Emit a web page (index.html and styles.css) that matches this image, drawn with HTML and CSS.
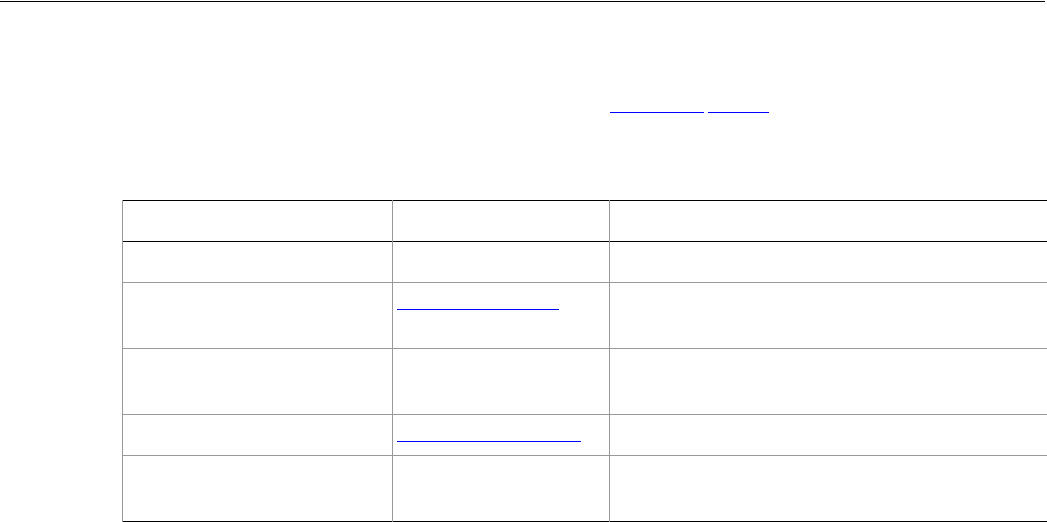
FILE: index.html
```html
<!DOCTYPE html>
<html lang="en">
<head>
<meta charset="utf-8">
<title>System requirements</title>
<link rel="stylesheet" href="styles.css">
</head>
<body>
<div class="rule"></div>
<main class="content">
  <p class="intro">Before installing the package, please, review the minimum hardware <a href="#req">requirements</a> <a href="#check">checklist</a>.</p>
  <table class="grid">
    <thead>
      <tr>
        <th class="c1">Component</th>
        <th class="c2">Reference</th>
        <th class="c3">Notes</th>
      </tr>
    </thead>
    <tbody>
      <tr>
        <td>Operating system</td>
        <td>Linux 5.x or later</td>
        <td>64-bit kernel required</td>
      </tr>
      <tr>
        <td>Development headers</td>
        <td><a href="#api">Programming interface</a></td>
        <td>Headers must match the installed kernel version exactly, otherwise the build step will fail.</td>
      </tr>
      <tr>
        <td>Runtime libraries</td>
        <td>glibc 2.31</td>
        <td>Older releases may work but are not tested; use the bundled compatibility layer if needed.</td>
      </tr>
      <tr>
        <td>Documentation</td>
        <td><a href="#notes">Release notes and errata.</a></td>
        <td>Updated with every release</td>
      </tr>
      <tr>
        <td>Build tools</td>
        <td>GCC 10, CMake 3.20</td>
        <td>Clang is supported as an alternative compiler when building from the source distribution.</td>
      </tr>
    </tbody>
  </table>
</main>
</body>
</html>
```
FILE: styles.css
```css
html, body {
  margin: 0;
  padding: 0;
  background: #fff;
}
body {
  font-family: "Liberation Sans", Arial, sans-serif;
  font-size: 16px;
  line-height: 25px;
  color: transparent;
}
.rule {
  margin: 1px 2px 0 0;
  border-top: 1px solid #000;
}
.content {
  padding-left: 122px;
}
.intro {
  margin: 92px 0 0 0;
}
a {
  color: transparent;
  text-decoration: none;
  background-image: linear-gradient(#0000ff, #0000ff);
  background-repeat: no-repeat;
  background-size: 100% 1px;
  background-position: 0 calc(100% - 2px);
}
.grid {
  margin-top: 81px;
  width: 925px;
  table-layout: fixed;
  border-collapse: collapse;
  border-left: 1px solid #999;
  border-right: 1px solid #999;
  border-bottom: 1px solid #000;
}
.grid thead tr {
  border-top: 1px solid #000;
  border-bottom: 1px solid #000;
}
.grid th,
.grid td {
  box-sizing: border-box;
  padding: 8px 4px 7px 4px;
  text-align: left;
  vertical-align: top;
  font-weight: normal;
  border-left: 1px solid #999;
  border-right: 1px solid #999;
}
.grid tbody tr + tr {
  border-top: 1px solid #999;
}
.c1 { width: 270px; }
.c2 { width: 217px; }
.c3 { width: 438px; }
```
